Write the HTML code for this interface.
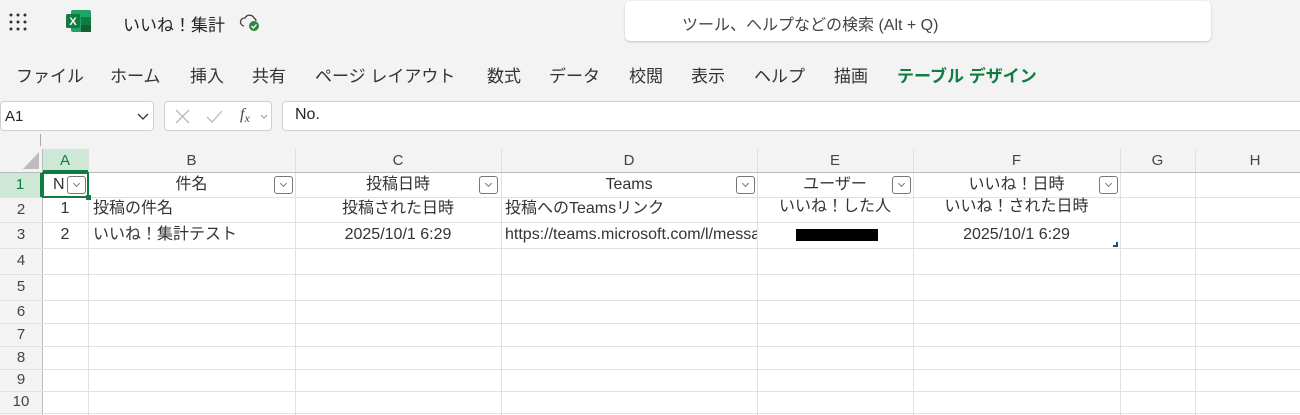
<!DOCTYPE html>
<html><head><meta charset="utf-8"><style>
*{margin:0;padding:0;box-sizing:border-box}
body{width:1300px;height:415px;overflow:hidden;background:#f3f3f3;font-family:"Liberation Sans","Noto Sans CJK JP",sans-serif;color:#242424;position:relative}
.a{position:absolute;white-space:nowrap}
.menu span{position:absolute;top:62px;font-size:17px;color:#333}
.grid{position:absolute;left:0;top:149px;width:1300px;height:266px;background:#fff}
.vl{position:absolute;top:0;width:1px;height:266px;background:#e1e1e1}
.hl{position:absolute;left:0;height:1px;width:1300px;background:#e1e1e1}
.ch{position:absolute;top:0;height:23px;font-size:15px;line-height:23px;text-align:center;color:#444;background:#f3f3f3}
.rh{position:absolute;left:0;width:42px;font-size:15px;text-align:center;color:#444;background:#f3f3f3}
.c{position:absolute;font-size:16px;color:#333;white-space:nowrap;overflow:hidden;height:24px;line-height:24px}
.c span,.c{vertical-align:top}
.r1{top:173px}.r2{top:197px}.r3{top:223px}
.dd{position:absolute;width:19px;height:18px;border:1px solid #777;border-radius:3px;background:#fff;top:176px}
.dd:after{content:"";position:absolute;left:6px;top:4px;width:4px;height:4px;border-right:1px solid #777;border-bottom:1px solid #777;transform:rotate(45deg)}
</style></head><body>
<svg class="a" style="left:9px;top:13px" width="18" height="18"><g fill="#333"><circle cx="2" cy="2" r="1.5"/><circle cx="9" cy="2" r="1.5"/><circle cx="16" cy="2" r="1.5"/><circle cx="2" cy="9" r="1.5"/><circle cx="9" cy="9" r="1.5"/><circle cx="16" cy="9" r="1.5"/><circle cx="2" cy="16" r="1.5"/><circle cx="16" cy="16" r="1.5"/><circle cx="9" cy="16" r="1.5"/></g></svg>
<svg class="a" style="left:66px;top:9px" width="26" height="24"><rect x="5" y="1" width="20" height="22" rx="2" fill="#21a366"/><rect x="15" y="8" width="10" height="8" fill="#107c41"/><rect x="15" y="16" width="10" height="7" fill="#185c37"/><rect x="0" y="5" width="14" height="14" rx="1.5" fill="#107c41"/><text x="7" y="16" font-size="11" fill="#fff" text-anchor="middle" font-family="Liberation Sans" font-weight="bold">X</text></svg>
<div class="a" style="left:123px;top:11px;font-size:17px">いいね！集計</div>
<svg class="a" style="left:238px;top:11px" width="24" height="22"><path d="M6 15a4 4 0 0 1 1-8 5 5 0 0 1 9 0 3.5 3.5 0 0 1 2 3" fill="none" stroke="#444" stroke-width="1.3"/><circle cx="16" cy="15" r="5" fill="#2e8540"/><path d="M13.5 15l2 2 3-3.5" fill="none" stroke="#fff" stroke-width="1.3"/></svg>
<div class="a" style="left:625px;top:1px;width:586px;height:40px;background:#fff;border-radius:5px;box-shadow:0 1px 2px rgba(0,0,0,.2)"></div>
<div class="a" style="left:682px;top:11px;font-size:16px;color:#444">ツール、ヘルプなどの検索 (Alt + Q)</div>
<div class="menu">
<span style="left:16px">ファイル</span><span style="left:110px">ホーム</span><span style="left:190px">挿入</span><span style="left:252px">共有</span><span style="left:315px">ページ レイアウト</span><span style="left:487px">数式</span><span style="left:549px">データ</span><span style="left:629px">校閲</span><span style="left:691px">表示</span><span style="left:754px">ヘルプ</span><span style="left:834px">描画</span><span style="left:897px;color:#107c41;font-weight:bold">テーブル デザイン</span>
</div>
<div class="a" style="left:0;top:101px;width:154px;height:30px;background:#fff;border:1px solid #d0d0d0;border-radius:4px"></div>
<div class="a" style="left:5px;top:108px;font-size:15px">A1</div>
<svg class="a" style="left:137px;top:113px" width="12" height="8"><path d="M1 1l5 5 5-5" fill="none" stroke="#333" stroke-width="1.3"/></svg>
<div class="a" style="left:164px;top:101px;width:108px;height:30px;background:#fff;border:1px solid #d0d0d0;border-radius:4px"></div>
<svg class="a" style="left:174px;top:108px" width="60" height="16"><path d="M2 2l13 13M15 2L2 15" stroke="#bbb" stroke-width="1.3"/><path d="M33 9l5 5 10-11" fill="none" stroke="#bbb" stroke-width="1.3"/></svg>
<div class="a" style="left:240px;top:106px;font-size:16px;font-style:italic;font-family:'Liberation Serif',serif;color:#444">f<span style="font-size:12px;position:relative;top:3px">x</span></div>
<svg class="a" style="left:260px;top:114px" width="8" height="6"><path d="M1 1l3 3 3-3" fill="none" stroke="#999"/></svg>
<div class="a" style="left:282px;top:101px;width:1030px;height:30px;background:#fff;border:1px solid #d0d0d0;border-radius:4px"></div>
<div class="a" style="left:295px;top:106px;font-size:16px">No.</div>
<div class="a" style="left:40px;top:134px;width:1px;height:12px;background:#aaa"></div>

<div class="grid">
<div class="ch" style="left:0;width:1300px"></div>
<div class="rh" style="top:0;height:266px"></div>
<svg class="a" style="left:22px;top:2px" width="18" height="19"><path d="M17 1V18H1z" fill="#bdbdbd"/></svg>
<div class="ch" style="left:42px;width:46px;background:#cde8d6;color:#107c41;border-bottom:2px solid #107c41">A</div>
<div class="ch" style="left:88px;width:207px">B</div>
<div class="ch" style="left:295px;width:206px">C</div>
<div class="ch" style="left:501px;width:256px">D</div>
<div class="ch" style="left:757px;width:156px">E</div>
<div class="ch" style="left:913px;width:207px">F</div>
<div class="ch" style="left:1120px;width:75px">G</div>
<div class="ch" style="left:1195px;width:120px">H</div>
<div class="rh" style="top:23px;height:25px;line-height:25px;background:#cde8d6;color:#107c41;border-right:2px solid #107c41">1</div>
<div class="rh" style="top:48px;height:25px;line-height:25px">2</div>
<div class="rh" style="top:73px;height:26px;line-height:26px">3</div>
<div class="rh" style="top:99px;height:26px;line-height:26px">4</div>
<div class="rh" style="top:125px;height:26px;line-height:26px">5</div>
<div class="rh" style="top:151px;height:23px;line-height:23px">6</div>
<div class="rh" style="top:174px;height:23px;line-height:23px">7</div>
<div class="rh" style="top:197px;height:23px;line-height:23px">8</div>
<div class="rh" style="top:220px;height:22px;line-height:22px">9</div>
<div class="rh" style="top:242px;height:24px;line-height:22px">10</div>
<div class="vl" style="left:42px;background:#bbb"></div>
<div class="vl" style="left:88px"></div><div class="vl" style="left:295px"></div><div class="vl" style="left:501px"></div><div class="vl" style="left:757px"></div><div class="vl" style="left:913px"></div><div class="vl" style="left:1120px"></div><div class="vl" style="left:1195px"></div>
<div class="hl" style="top:23px;background:#bbb"></div>
<div class="hl" style="top:48px"></div><div class="hl" style="top:73px"></div><div class="hl" style="top:99px"></div><div class="hl" style="top:125px"></div><div class="hl" style="top:151px"></div><div class="hl" style="top:174px"></div><div class="hl" style="top:197px"></div><div class="hl" style="top:220px"></div><div class="hl" style="top:242px"></div><div class="hl" style="top:264px"></div>
</div>
<div class="a" style="left:42px;top:172px;width:47px;height:26px;border:2px solid #107c41"></div>
<div class="a" style="left:86px;top:195px;width:5px;height:5px;background:#107c41"></div>
<div class="c r1" style="left:53px">N</div>
<div class="c r1" style="left:88px;width:207px;text-align:center">件名</div>
<div class="c r1" style="left:295px;width:206px;text-align:center">投稿日時</div>
<div class="c r1" style="left:501px;width:256px;text-align:center">Teams</div>
<div class="c r1" style="left:757px;width:156px;text-align:center">ユーザー</div>
<div class="c r1" style="left:913px;width:207px;text-align:center">いいね！日時</div>
<div class="dd" style="left:67px"></div><div class="dd" style="left:274px"></div><div class="dd" style="left:479px"></div><div class="dd" style="left:736px"></div><div class="dd" style="left:892px"></div><div class="dd" style="left:1099px"></div>
<div class="c r2" style="left:42px;width:46px;text-align:center">1</div>
<div class="c r2" style="left:93px">投稿の件名</div>
<div class="c r2" style="left:295px;width:206px;text-align:center">投稿された日時</div>
<div class="c r2" style="left:505px">投稿へのTeamsリンク</div>
<div class="c" style="left:757px;top:195px;width:156px;text-align:center">いいね！した人</div>
<div class="c" style="left:913px;top:195px;width:207px;text-align:center">いいね！された日時</div>
<div class="c r3" style="left:42px;width:46px;text-align:center">2</div>
<div class="c r3" style="left:93px">いいね！集計テスト</div>
<div class="c r3" style="left:295px;width:206px;text-align:center">2025/10/1 6:29</div>
<div class="c r3" style="left:505px;width:252px">https://teams.microsoft.com/l/message</div>
<div class="a" style="left:796px;top:229px;width:82px;height:12px;background:#000"></div>
<div class="c r3" style="left:913px;width:207px;text-align:center">2025/10/1 6:29</div>
<div class="a" style="left:1113px;top:242px;width:5px;height:5px;border-right:2px solid #1f4e79;border-bottom:2px solid #1f4e79"></div>
</body></html>
